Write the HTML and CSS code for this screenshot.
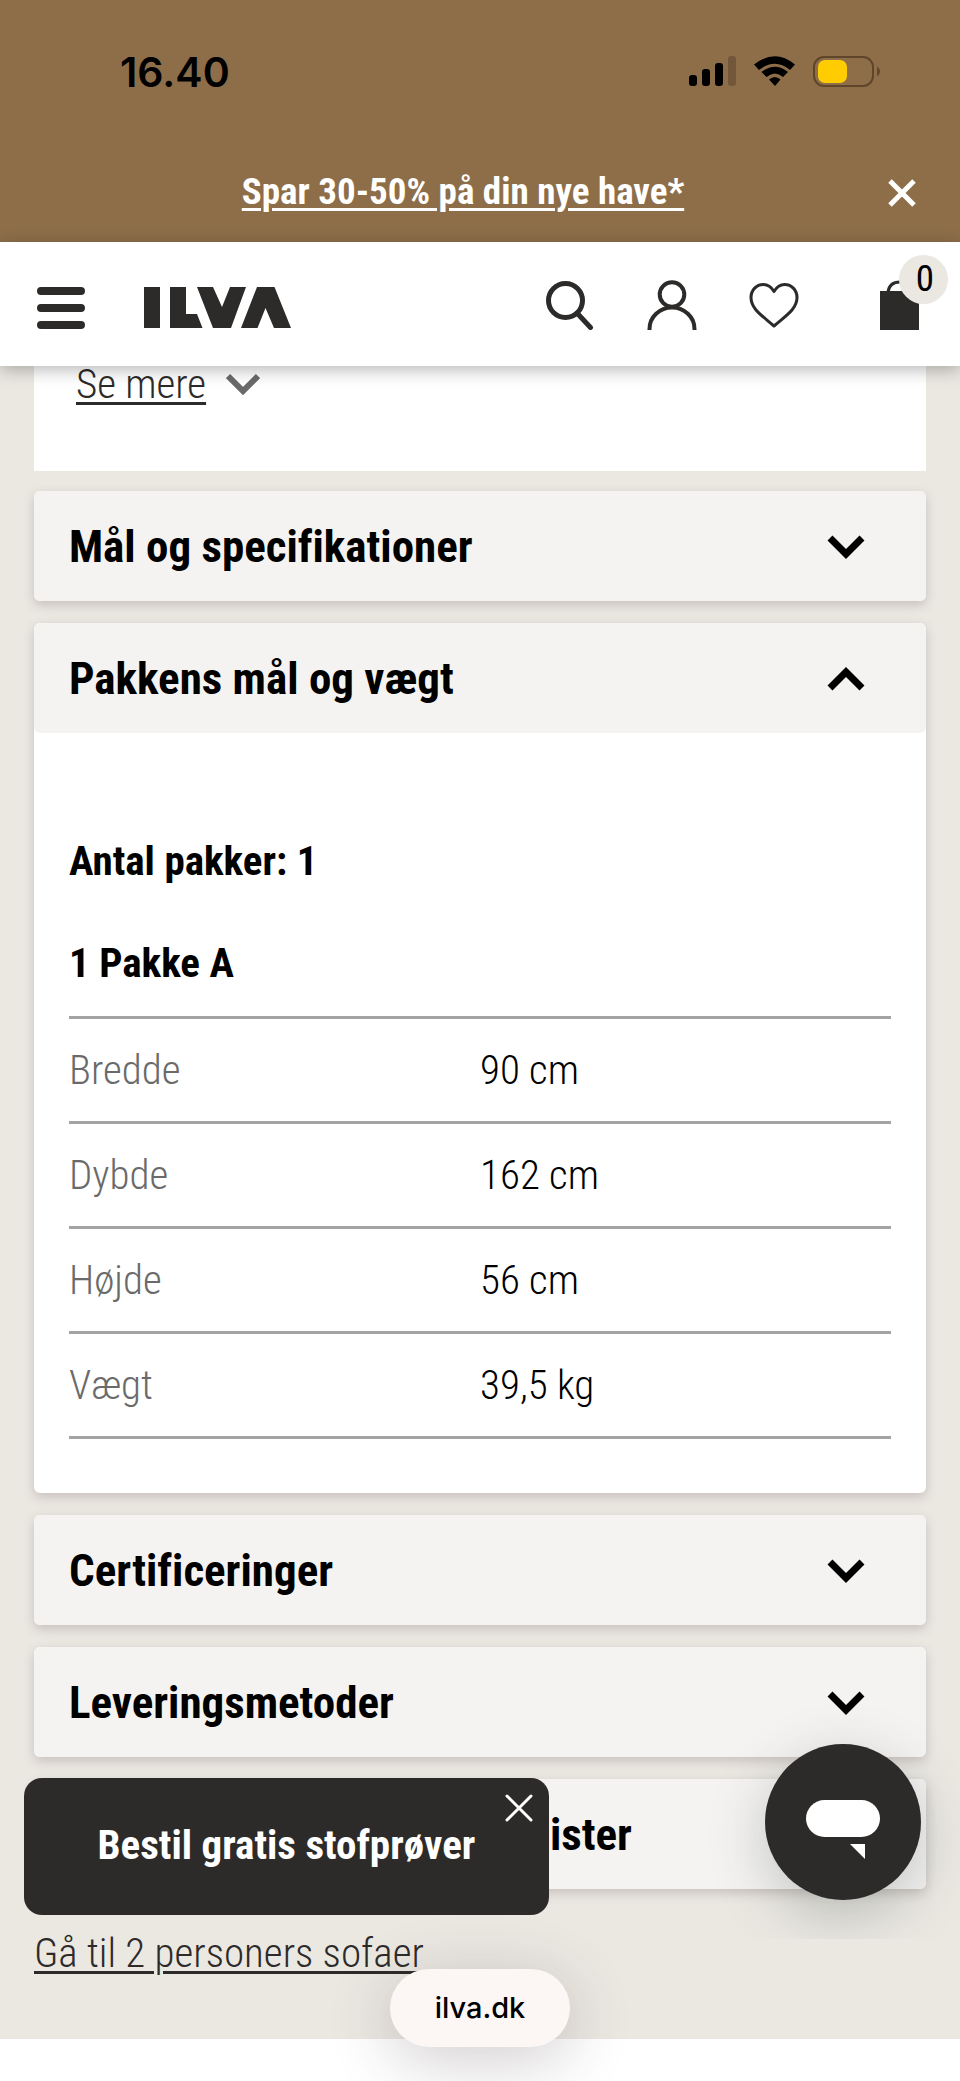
FILE: index.html
```html
<!DOCTYPE html>
<html lang="da">
<head>
<meta charset="utf-8">
<meta name="viewport" content="width=device-width, initial-scale=1">
<title>ILVA</title>
<link rel="stylesheet" href="styles.css">
</head>
<body>
<div class="top">
  <div class="status">
    <span class="clock">16.40</span>
    <svg class="status-icons" width="194" height="34" viewBox="0 0 194 34" aria-hidden="true">
      <rect x="1" y="20" width="8" height="11" rx="3"/>
      <rect x="14" y="14" width="8" height="17" rx="3"/>
      <rect x="27" y="8" width="8" height="23" rx="3"/>
      <rect x="40" y="1" width="8" height="30" rx="3" fill="#73573a"/>
      <path d="M66 9.500Q87-7 107 9.500L102 15Q87 2.500 71 15ZM73.500 17Q87 6.500 100 17L95 22Q87 15 78.500 22ZM81 24.500Q87 19.500 92.500 24.500L87 31Z"/>
      <rect x="126" y="2" width="59" height="29" rx="10" fill="none" stroke="#5f452a" stroke-width="2"/>
      <rect x="130" y="5" width="29" height="23" rx="7" fill="#ffcc02"/>
      <path d="M189 11.500q3 2 3 5t-3 5Z" fill="#5f452a"/>
    </svg>
  </div>
  <div class="promo">
    <a class="promo-link" href="#">Spar 30-50% på din nye have*</a>
    <button class="icon-button promo-close" aria-label="Luk">
      <svg width="28" height="28" viewBox="0 0 28 28"><path d="M2 2 26 26M26 2 2 26" stroke="#fff" stroke-width="5"/></svg>
    </button>
  </div>
</div>

<header class="header">
  <button class="icon-button" aria-label="Menu">
    <svg width="50" height="44" viewBox="0 0 50 44"><path d="M5 5H45M5 22H45M5 39H45" stroke="#2d2b2a" stroke-width="8" stroke-linecap="round"/></svg>
  </button>
  <a class="logo" href="#" aria-label="ILVA">
    <svg width="148" height="42" viewBox="0 0 148 42" fill="#2d2b2a"><path d="M0 0H16V41H0ZM26 0H42V27H53L58.500 41H26ZM53 0H69L78 20 86 0H102L87 41H69ZM113 0H130.500L147 41H130L121.500 21 113.500 41H97Z"/></svg>
  </a>
  <nav class="tools" aria-label="Værktøjer">
    <button class="icon-button" aria-label="Søg">
      <svg width="50" height="52" viewBox="0 0 50 52" fill="none" stroke="#2d2b2a" stroke-width="5"><circle cx="20.500" cy="22.500" r="17"/><path d="M32 35 45.500 49.500" stroke-linecap="round"/></svg>
    </button>
    <button class="icon-button" aria-label="Konto">
      <svg width="50" height="52" viewBox="0 0 50 52" fill="none" stroke="#2d2b2a" stroke-width="4"><circle cx="25" cy="16.500" r="12.300"/><path d="M2.500 52V51A22.500 21.500 0 0 1 47.500 51V52"/></svg>
    </button>
    <button class="icon-button" aria-label="Ønskeliste">
      <svg width="50" height="52" viewBox="0 0 50 52" fill="none" stroke="#2d2b2a" stroke-width="3" stroke-linejoin="round"><path d="M25 13.500C22 8.500 18.500 6.500 14.500 6.500 7 6.500 2 12.500 2 19.500 2 31 13 37.500 25 48 37 37.500 48 31 48 19.500 48 12.500 43 6.500 35.500 6.500 31.500 6.500 28 8.500 25 13.500Z"/></svg>
    </button>
    <button class="icon-button cart" aria-label="Kurv">
      <svg width="39" height="52" viewBox="0 0 39 52"><path d="M0 13H39V52H0Z" fill="#2d2b2a"/><path d="M8 14C9 7 13 4 20 4S30 7 31 14" fill="none" stroke="#2d2b2a" stroke-width="3"/></svg>
      <span class="cart-count">0</span>
    </button>
  </nav>
</header>

<main class="content">
  <section class="intro">
    <button class="more"><span class="more-text">Se mere</span>
      <svg width="34" height="22" viewBox="0 0 34 22"><path d="M2 3 17 18 32 3" fill="none" stroke="#6a6a6a" stroke-width="6"/></svg>
    </button>
  </section>

  <section class="card">
    <h2 class="card-title"><button class="toggle" aria-expanded="false">Mål og specifikationer
      <svg width="38" height="24" viewBox="0 0 38 24"><path d="M3 3 19 19 35 3"/></svg></button></h2>
  </section>

  <section class="card">
    <h2 class="card-title"><button class="toggle" aria-expanded="true">Pakkens mål og vægt
      <svg width="38" height="24" viewBox="0 0 38 24"><path d="M3 21 19 5 35 21"/></svg></button></h2>
    <div class="panel">
      <h3 class="panel-title">Antal pakker: 1</h3>
      <h3 class="panel-title">1 Pakke A</h3>
      <table class="specs">
        <tbody>
          <tr><th scope="row">Bredde</th><td>90 cm</td></tr>
          <tr><th scope="row">Dybde</th><td>162 cm</td></tr>
          <tr><th scope="row">Højde</th><td>56 cm</td></tr>
          <tr><th scope="row">Vægt</th><td>39,5 kg</td></tr>
        </tbody>
      </table>
    </div>
  </section>

  <section class="card">
    <h2 class="card-title"><button class="toggle" aria-expanded="false">Certificeringer
      <svg width="38" height="24" viewBox="0 0 38 24"><path d="M3 3 19 19 35 3"/></svg></button></h2>
  </section>

  <section class="card">
    <h2 class="card-title"><button class="toggle" aria-expanded="false">Leveringsmetoder
      <svg width="38" height="24" viewBox="0 0 38 24"><path d="M3 3 19 19 35 3"/></svg></button></h2>
  </section>

  <section class="card">
    <h2 class="card-title"><button class="toggle toggle-covered" aria-expanded="false">ister</button></h2>
  </section>

  <a class="back-link" href="#">Gå til 2 personers sofaer</a>
</main>

<div class="samples">
  <button class="samples-button">Bestil gratis stofprøver</button>
  <button class="icon-button samples-close" aria-label="Luk">
    <svg width="28" height="28" viewBox="0 0 28 28"><path d="M2 2 26 26M26 2 2 26" stroke="#fff" stroke-width="3" stroke-linecap="round"/></svg>
  </button>
</div>

<div class="chat">
  <button class="chat-button" aria-label="Chat">
    <svg width="76" height="62" viewBox="0 0 76 62" fill="#fff"><rect x="1" y="1" width="74" height="37" rx="18.500"/><path d="M45 45H60V60Z"/></svg>
  </button>
</div>

<div class="address">ilva.dk</div>
</body>
</html>
```
FILE: styles.css
```css
* { box-sizing: border-box; }

body {
  margin: 0;
  padding-bottom: 42px;
  position: relative;
  overflow-x: hidden;
  background: #fff;
  color: #000;
  font-family: "Roboto Condensed", Roboto, "Liberation Sans", sans-serif;
  font-size: 41px;
  font-weight: 300;
  font-variant-ligatures: none;
  line-height: 48px;
}

h2, h3 { margin: 0; }

button {
  font: inherit;
  font-variant-ligatures: inherit;
  color: inherit;
  border: 0;
  padding: 0;
  background: none;
}

svg { display: block; flex: none; }

.icon-button { display: flex; position: relative; }

.top { background: #8d6e49; color: #fff; }

.status {
  display: flex;
  justify-content: space-between;
  align-items: center;
  height: 144px;
  padding: 0 78px 0 120px;
}

.clock {
  font-family: Inter, sans-serif;
  font-size: 41px;
  font-weight: 600;
  color: #000;
}

.promo {
  display: flex;
  justify-content: center;
  align-items: center;
  position: relative;
  height: 98px;
  padding: 0 34px 2px 0;
}

.promo-link {
  color: #fff;
  font-size: 37px;
  font-weight: 700;
  text-decoration-thickness: 3px;
  text-underline-offset: 4px;
}

.promo-close { position: absolute; right: 44px; top: 35px; }

.header {
  display: flex;
  align-items: center;
  position: relative;
  z-index: 1;
  height: 124px;
  padding: 8px 41px 0 36px;
  background: #fff;
  box-shadow: 0 4px 16px rgba(0, 0, 0, 0.28);
}

.logo { margin-left: 58px; }

.tools {
  display: flex;
  gap: 52px;
  margin-left: auto;
  padding-bottom: 8px;
}

.cart { margin-left: 29px; }

.cart-count {
  position: absolute;
  left: 19px;
  top: -23px;
  width: 49px;
  height: 49px;
  padding-left: 3px;
  border-radius: 50%;
  background: #ebe7e1;
  color: #000;
  font-size: 37px;
  font-weight: 400;
  text-align: center;
}

.content {
  display: flex;
  flex-direction: column;
  min-height: 1673px;
  padding: 0 34px 36px;
  background: #ebe8e2;
}

.intro { margin-bottom: 20px; padding: 0 42px 69px; background: #fff; }

.more { display: flex; align-items: center; gap: 20px; height: 36px; }

.more-text {
  color: #2d2b2a;
  text-decoration: underline;
  text-decoration-thickness: 3px;
  text-underline-offset: 4px;
}

.card {
  border-radius: 6px;
  background: #fff;
  box-shadow: 0 4px 12px rgba(60, 30, 40, 0.2);
}

.card + .card { margin-top: 22px; }

.card-title { font-size: 45px; line-height: 52px; }

.toggle {
  display: flex;
  justify-content: space-between;
  align-items: center;
  width: 100%;
  height: 110px;
  padding: 2px 61px 0 35px;
  border-radius: 6px;
  background: #f5f3f2;
  font-weight: 700;
  text-align: left;
}

.toggle path { fill: none; stroke: #000; stroke-width: 7; }

.toggle-covered { padding-left: 516px; }

.panel { padding: 104px 35px 54px; }

.panel-title { margin-bottom: 54px; font-size: 41px; line-height: 48px; }

.panel-title + .panel-title { margin-bottom: 29px; }

.specs {
  width: 100%;
  table-layout: fixed;
  border-collapse: collapse;
  border-top: 3px solid #a3a3a3;
}

.specs th, .specs td {
  height: 105px;
  padding: 0;
  border-bottom: 3px solid #a3a3a3;
  text-align: left;
  font-weight: 300;
}

.specs th { color: #6a6a6a; }

.back-link {
  align-self: flex-start;
  margin-top: 40px;
  color: #2d2b2a;
  text-decoration-thickness: 3px;
  text-underline-offset: 4px;
}

.samples {
  position: absolute;
  left: 24px;
  bottom: 166px;
  z-index: 2;
  width: 525px;
  border-radius: 18px;
  background: #2d2b2a;
  color: #fff;
}

.samples-button { width: 100%; height: 137px; padding-bottom: 4px; font-weight: 700; }

.samples-close { position: absolute; right: 16px; top: 16px; }

.chat {
  position: absolute;
  right: 0;
  bottom: 142px;
  z-index: 2;
  padding: 70px 39px 39px 70px;
  overflow: hidden;
}

.chat-button {
  display: flex;
  justify-content: center;
  align-items: center;
  width: 156px;
  height: 156px;
  padding-top: 16px;
  border-radius: 50%;
  background: #2d2b2a;
  box-shadow: 0 16px 56px rgba(40, 60, 60, 0.25);
}

.address {
  position: absolute;
  left: 50%;
  bottom: 34px;
  z-index: 3;
  width: 180px;
  margin-left: -90px;
  border-radius: 39px;
  background: #fcf7f4;
  box-shadow: 0 12px 64px rgba(60, 40, 50, 0.24);
  font-family: Inter, sans-serif;
  font-size: 29px;
  font-weight: 500;
  line-height: 78px;
  text-align: center;
}
```
